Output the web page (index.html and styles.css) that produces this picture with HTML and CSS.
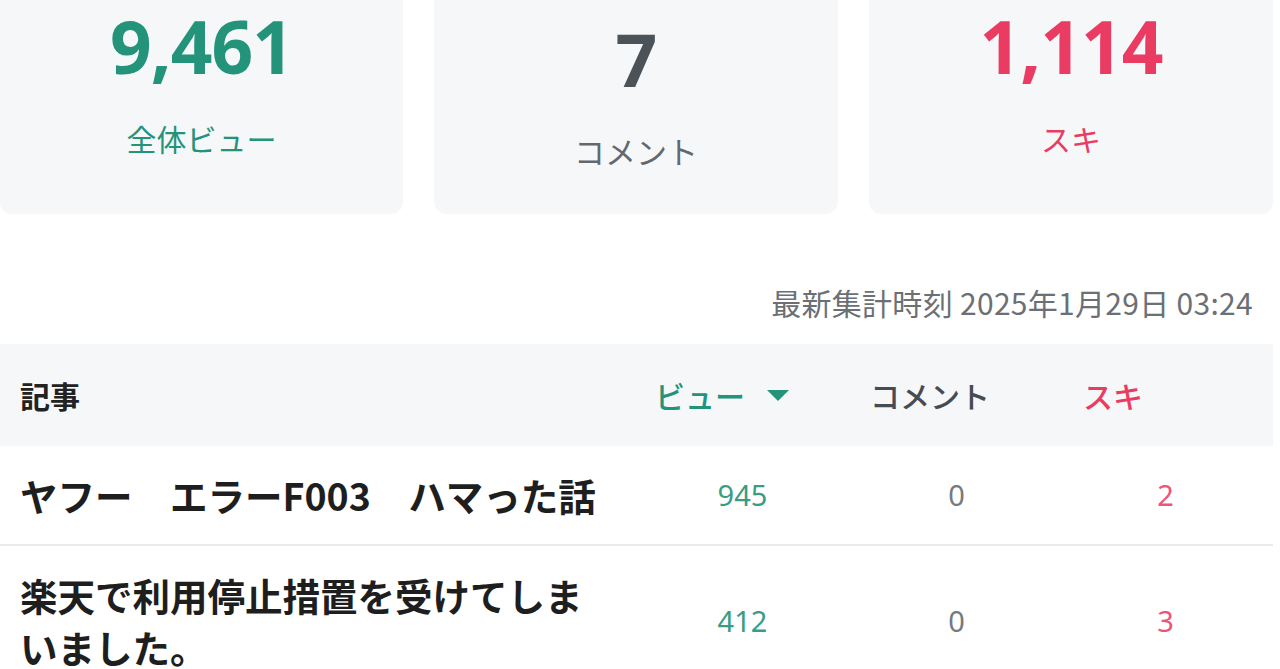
FILE: index.html
```html
<!DOCTYPE html>
<html lang="ja">
<head>
<meta charset="utf-8">
<title>アクセス状況</title>
<link rel="stylesheet" href="styles.css">
</head>
<body>
<main class="page">
  <section class="stats">
    <div class="stat stat-views">
      <div class="stat-num">9,461</div>
      <div class="stat-label">全体ビュー</div>
    </div>
    <div class="stat stat-comments">
      <div class="stat-num">7</div>
      <div class="stat-label">コメント</div>
    </div>
    <div class="stat stat-likes">
      <div class="stat-num">1,114</div>
      <div class="stat-label">スキ</div>
    </div>
  </section>

  <p class="updated">最新集計時刻 2025年1月29日 03:24</p>

  <section class="table">
    <div class="row head">
      <div class="cell title">記事</div>
      <div class="cell h-views">ビュー <span class="caret"></span></div>
      <div class="cell h-comments">コメント</div>
      <div class="cell h-likes">スキ</div>
    </div>
    <div class="row">
      <div class="cell title">ヤフー　エラーF003　ハマった話</div>
      <div class="cell num views">945</div>
      <div class="cell num comments">0</div>
      <div class="cell num likes">2</div>
    </div>
    <div class="row">
      <div class="cell title">楽天で利用停止措置を受けてしまいました。</div>
      <div class="cell num views">412</div>
      <div class="cell num comments">0</div>
      <div class="cell num likes">3</div>
    </div>
  </section>
</main>
</body>
</html>
```

FILE: styles.css
```css
* { box-sizing: border-box; }

html, body {
  margin: 0;
  padding: 0;
  background: #ffffff;
  overflow: hidden;
}

body {
  font-family: "Noto Sans", "Noto Sans CJK JP", sans-serif;
  color: #222;
}

.page {
  width: 1273px;
}

.stats {
  display: grid;
  grid-template-columns: 403px 404px 404px;
  column-gap: 31px;
  margin-top: -14px;
}

.stat {
  background: #f5f7f9;
  border-radius: 12px;
  height: 228px;
  display: flex;
  flex-direction: column;
  align-items: center;
  padding-top: 22px;
}

.stat-num {
  font-family: "Noto Sans", "Open Sans", sans-serif;
  font-weight: 700;
  font-size: 73px;
  line-height: 76px;
  letter-spacing: -1px;
}

.stat-label {
  font-family: "Noto Sans CJK JP", sans-serif;
  font-size: 30px;
  line-height: 40px;
  margin-top: 34px;
}

.stat-views .stat-num,
.stat-views .stat-label { color: #23937a; }

.stat-comments { padding-top: 35px; }
.stat-comments .stat-num { color: #4b5258; }
.stat-comments .stat-label { color: #62686e; font-size: 31px; }

.stat-likes .stat-num,
.stat-likes .stat-label { color: #ea3c62; }

.updated {
  margin: 0;
  padding: 68px 20px 0 0;
  text-align: right;
  font-family: "Noto Sans CJK JP", sans-serif;
  font-size: 30px;
  line-height: 40px;
  color: #6b7075;
  letter-spacing: 0.3px;
}

.table {
  margin-top: 22px;
}

.row {
  display: grid;
  grid-template-columns: 630px 225px 203px 215px;
  align-items: center;
  border-bottom: 2px solid #e8eaec;
  padding: 23px 0;
}

.row.head {
  background: #f5f7f9;
  border-bottom: none;
  padding: 0;
  height: 102px;
}

.cell {
  font-family: "Noto Sans CJK JP", sans-serif;
}

.title {
  padding-left: 20px;
  padding-right: 22px;
  font-size: 37.5px;
  line-height: 52px;
  font-weight: 700;
  color: #1e1e1e;
}

.head .cell {
  font-size: 30px;
  line-height: 40px;
  font-weight: 500;
}

.head .title {
  font-size: 30px;
  font-weight: 700;
  color: #222;
}

.h-views {
  color: #23937a;
  padding-left: 25px;
  display: flex;
  align-items: center;
  gap: 14px;
}

.caret {
  width: 0;
  height: 0;
  border-left: 11px solid transparent;
  border-right: 11px solid transparent;
  border-top: 11px solid #23937a;
  margin-left: 8px;
}

.h-comments {
  color: #464c52;
  padding-left: 15px;
}

.h-likes {
  color: #ea3c62;
  padding-left: 25px;
}

.num {
  text-align: center;
  font-family: "Noto Sans", sans-serif;
  font-size: 29px;
  line-height: 40px;
}

.num.views { color: #3a9c83; }
.num.comments { color: #737a80; }
.num.likes { color: #ec5577; }
```
